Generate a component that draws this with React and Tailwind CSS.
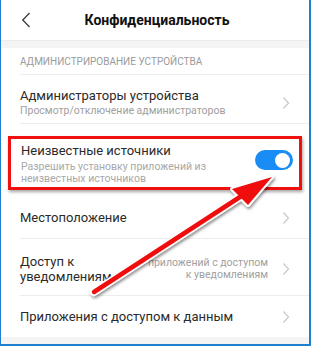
import React from 'react';

const font = { fontFamily: 'Roboto, "Noto Sans", sans-serif' };

function Chevron() {
  return (
    <svg width="8" height="14" viewBox="0 0 8 14" className="shrink-0">
      <path d="M1.5 1.5 L6.5 7 L1.5 12.5" fill="none" stroke="#c8c8c8" strokeWidth="1.2" />
    </svg>
  );
}

function Toggle() {
  return (
    <div className="w-[38px] h-[20px] rounded-full bg-[#1a8cf5] flex items-center justify-end pr-[3px] shrink-0">
      <div className="w-[15px] h-[15px] rounded-full bg-white" />
    </div>
  );
}

export default function App() {
  return (
    <div className="relative w-[311px] h-[346px] bg-white overflow-hidden border-l border-r-2 border-b-2 border-[#1f7fcf] text-[#2a2a2a]" style={font}>
      {/* header */}
      <div className="h-[40px] flex items-center relative">
        <svg width="10" height="16" viewBox="0 0 10 16" className="absolute left-[20px] top-[12px]">
          <path d="M8.5 1 L1.8 8 L8.5 15" fill="none" stroke="#444" strokeWidth="1.4" />
        </svg>
        <div className="w-full text-center text-[14px] font-bold text-[#111] pl-[4px]">Конфиденциальность</div>
      </div>
      <div className="h-[8px] bg-[#f4f4f4] border-t border-[#ececec]" />

      {/* section */}
      <div className="pl-[19px]">
        <div className="h-[27px] flex items-center pt-[1px] border-b border-[#ececec] text-[10px] text-[#9a9a9a]">
          АДМИНИСТРИРОВАНИЕ УСТРОЙСТВА
        </div>
        <div className="h-[49px] flex items-center pr-[19px] pt-[8px] border-b border-[#ececec]">
          <div className="flex-1">
            <div className="text-[13px] leading-[16px]">Администраторы устройства</div>
            <div className="text-[10.5px] leading-[14px] text-[#a0a0a0]">Просмотр/отключение администраторов</div>
          </div>
          <Chevron />
        </div>
      </div>

      {/* highlighted row */}
      <div className="mx-[7px] mt-[12px] h-[54px] border-[3px] border-[#f01010] shadow-[1px_2px_3px_rgba(0,0,0,0.35)] flex items-start pl-[10px] pr-[6px]">
        <div className="flex-1 pt-[4px]">
          <div className="text-[13px] leading-[16px]">Неизвестные источники</div>
          <div className="mt-[2px] text-[10.5px] leading-[12px] text-[#a8a8a8] w-[200px]">Разрешить установку приложений из неизвестных источников</div>
        </div>
        <div className="pt-[11px]">
          <Toggle />
        </div>
      </div>

      <div className="pl-[19px]">
        <div className="h-[49px] flex items-center pr-[19px] pt-[8px] border-b border-[#ececec]">
          <div className="flex-1 text-[13px] leading-[16px]">Местоположение</div>
          <Chevron />
        </div>
        <div className="h-[57px] flex items-center pr-[19px] pt-[3px] border-b border-[#ececec]">
          <div className="flex-1 text-[13px] leading-[15px]">
            Доступ к
            <br />
            уведомлениям
          </div>
          <div className="text-[10.5px] leading-[12px] text-[#a0a0a0] text-right mr-[14px]">
            приложений с доступом
            <br />
            к уведомлениям
          </div>
          <Chevron />
        </div>
        <div className="h-[41px] flex items-center pr-[19px]">
          <div className="flex-1 text-[13px] leading-[16px]">Приложения с доступом к данным</div>
          <Chevron />
        </div>
      </div>
      <div className="h-[10px] bg-[#f4f4f4]" />

      {/* arrow annotation */}
      <svg className="absolute left-0 top-0 pointer-events-none" width="311" height="346" viewBox="0 0 311 346">
        <defs>
          <filter id="sh" x="-20%" y="-20%" width="140%" height="140%">
            <feDropShadow dx="1" dy="2" stdDeviation="1.5" floodColor="#000" floodOpacity="0.45" />
          </filter>
        </defs>
        <g filter="url(#sh)">
          <line x1="93" y1="292" x2="242" y2="195" stroke="#fff" strokeWidth="8" strokeLinecap="round" />
          <polygon points="271,177 231,189 247,205" fill="#fff" stroke="#fff" strokeWidth="4" strokeLinejoin="round" />
          <line x1="93" y1="292" x2="242" y2="195" stroke="#f01010" strokeWidth="4.5" strokeLinecap="round" />
          <polygon points="271,177 231,189 247,205" fill="#f01010" />
        </g>
      </svg>
    </div>
  );
}
